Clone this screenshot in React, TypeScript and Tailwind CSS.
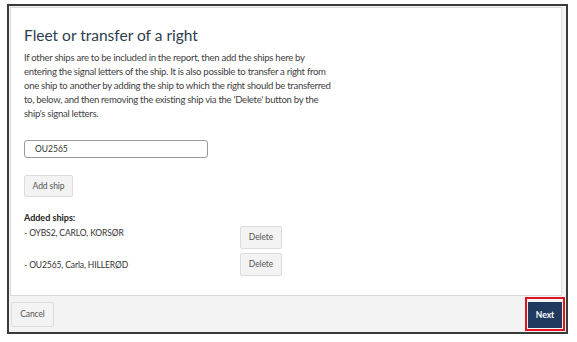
import React from "react";

export default function App() {
  const font = { fontFamily: "Lato, 'Open Sans', sans-serif" };
  const btn = "bg-[#f3f3f3] border border-[#dcdcdc] rounded-[2px] text-[8.5px] tracking-[-0.1px] text-[#555]";
  return (
    <div className="w-[577px] h-[342px] bg-white pt-[4px] pl-[7px]" style={font}>
      <div className="w-[561px] h-[330px] border-2 border-[#3a3a3a] bg-[#f3f3f3] flex flex-col">
        <div className="flex-1 flex pt-[1px] pl-[1px]">
          <div className="flex-1 bg-white border border-[#d9d9d9] pl-[13px] pt-[17px]">
            <h1 className="text-[15.5px] leading-[20px] text-[#2d3e50]">Fleet or transfer of a right</h1>
            <p className="mt-[6px] whitespace-nowrap text-[9.6px] tracking-[-0.3px] leading-[14px] text-[#3f3f3f]">
              If other ships are to be included in the report, then add the ships here by<br />
              entering the signal letters of the ship. It is also possible to transfer a right from<br />
              one ship to another by adding the ship to which the right should be transferred<br />
              to, below, and then removing the existing ship via the 'Delete' button by the<br />
              ship's signal letters.
            </p>
            <div className="mt-[19px] w-[184px] h-[18px] border border-[#9a9a9a] rounded-[3px] flex items-center pl-[10px] text-[8.5px] text-[#333]">
              OU2565
            </div>
            <button className={"mt-[17px] h-[22px] w-[49px] block " + btn}>Add ship</button>
            <div className="mt-[15px] text-[9px] font-bold text-[#222] leading-[12px]">Added ships:</div>
            <div className="flex items-start mt-[2px]">
              <span className="w-[216px] mt-[1px] text-[8.5px] tracking-[-0.1px] text-[#333] leading-[12px]">- OYBS2, CARLO, KORSØR</span>
              <button className={"h-[23px] w-[42px] " + btn}>Delete</button>
            </div>
            <div className="flex items-center mt-[4px]">
              <span className="w-[216px] text-[8.5px] tracking-[-0.1px] text-[#333] leading-[12px]">- OU2565, Carla, HILLERØD</span>
              <button className={"h-[23px] w-[42px] " + btn}>Delete</button>
            </div>
          </div>
          <div className="w-[4px]" />
        </div>
        <div className="h-[36px] flex items-center justify-between pl-[2px] pr-[1px]">
          <button className={"h-[25px] w-[43px] " + btn}>Cancel</button>
          <div className="border-2 border-[#e0141e] p-[1px]">
            <button className="h-[26px] w-[34px] bg-[#1f3a5f] text-white text-[8.5px] font-bold">Next</button>
          </div>
        </div>
      </div>
    </div>
  );
}
